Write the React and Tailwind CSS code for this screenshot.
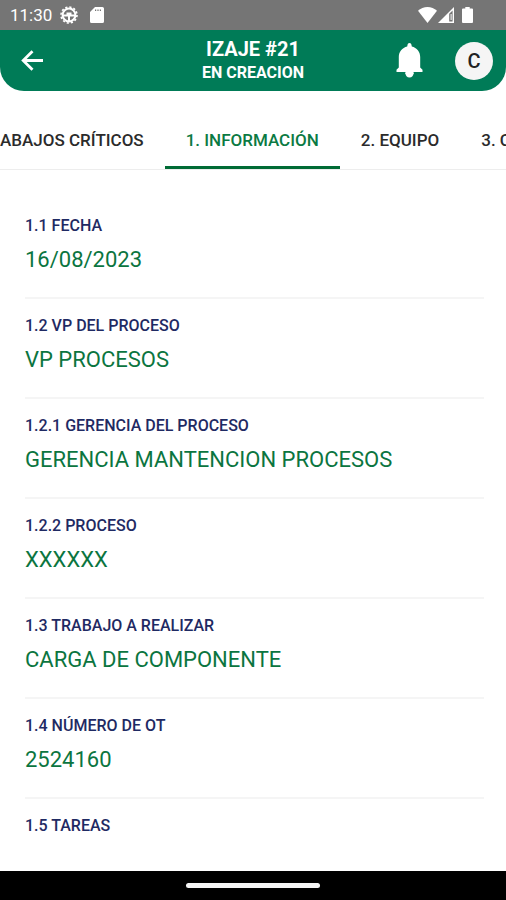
import { useLayoutEffect, useRef, useState } from "react";

const TABS = ["TRABAJOS CRÍTICOS", "1. INFORMACIÓN", "2. EQUIPO", "3. CARGA"];

const FIELDS = [
  { label: "1.1 FECHA", value: "16/08/2023" },
  { label: "1.2 VP DEL PROCESO", value: "VP PROCESOS" },
  { label: "1.2.1 GERENCIA DEL PROCESO", value: "GERENCIA MANTENCION PROCESOS" },
  { label: "1.2.2 PROCESO", value: "XXXXXX" },
  { label: "1.3 TRABAJO A REALIZAR", value: "CARGA DE COMPONENTE" },
  { label: "1.4 NÚMERO DE OT", value: "2524160" },
  { label: "1.5 TAREAS", value: "" },
];

function StatusBar() {
  return (
    <div className="flex h-[30px] shrink-0 items-center justify-between bg-[#757575] pr-[33px] pl-[10px] text-white">
      <div className="flex items-center">
        <span className="text-[17px] leading-5">11:30</span>
        <svg className="ml-2 size-[18px]" viewBox="0 0 18 18" fill="none" stroke="currentColor" aria-hidden="true">
          <circle cx="9" cy="9" r="6.4" strokeWidth="2" />
          <circle cx="9" cy="9" r="8" strokeWidth="1.6" strokeDasharray="2.2 2" />
          <path d="M3 9.500h12M9 9v6" strokeWidth="2" />
          <path d="M6.500 6.500h5v3h-5z" fill="currentColor" stroke="none" />
        </svg>
        <svg className="ml-3 h-4 w-[14px]" viewBox="0 0 14 16" fill="currentColor" aria-hidden="true">
          <path
            fillRule="evenodd"
            d="M5 0h7.4A1.6 1.6 0 0 1 14 1.6v12.8a1.6 1.6 0 0 1-1.6 1.6H1.6A1.6 1.6 0 0 1 0 14.4V5zM5 2.400v1.600h1.200V2.400zM7.400 2.400v1.600h1.200V2.400zM9.800 2.400v1.600h1.200V2.400z"
          />
        </svg>
      </div>
      <div className="flex items-center">
        <svg className="h-4 w-[19px]" viewBox="0 0 19 16" fill="currentColor" aria-hidden="true">
          <path d="M9.500 16 0 3.800C2.600 1.400 5.900 0 9.500 0S16.400 1.400 19 3.800z" />
        </svg>
        <svg className="ml-[1px] h-4 w-4" viewBox="0 0 16 16" aria-hidden="true">
          <path fill="currentColor" fillRule="evenodd" d="M16 0v16H0zM14.600 3.400l-3.400 3.400v7.800h3.400z" />
          <path fill="currentColor" d="M12.600 7h1v6h-1z" />
        </svg>
        <svg className="ml-2 h-4 w-[11px]" viewBox="0 0 11 16" fill="currentColor" aria-hidden="true">
          <path d="M3.300 0h4.400v1.600H10a1 1 0 0 1 1 1V15a1 1 0 0 1-1 1H1a1 1 0 0 1-1-1V2.600a1 1 0 0 1 1-1h2.300z" />
        </svg>
      </div>
    </div>
  );
}

function Header() {
  return (
    <header className="grid h-[61px] shrink-0 grid-cols-[1fr_auto_1fr] items-center rounded-b-3xl bg-[#007b57] px-[13px] text-white">
      <button type="button" aria-label="Volver" className="justify-self-start pl-2">
        <svg className="h-[21px] w-[22px]" viewBox="0 0 22 21" fill="none" stroke="currentColor" strokeWidth="2.800" aria-hidden="true">
          <path d="M22 10.500H2.500M11.500 1.200 2.200 10.500l9.300 9.300" />
        </svg>
      </button>
      <div className="text-center font-bold">
        <h1 className="text-[20px] leading-6">IZAJE #21</h1>
        <p className="text-[16px] leading-6">EN CREACION</p>
      </div>
      <div className="flex items-center gap-8 justify-self-end">
        <button type="button" aria-label="Notificaciones">
          <svg className="h-[35px] w-[27px]" viewBox="0 0 27 35" fill="currentColor" aria-hidden="true">
            <path d="M13.500 0c1.100 0 1.900.8 2 1.900l.3 1.500c5 1.100 8.400 5.300 8.400 10.600v10.500l2.300 2.200V29H.5v-2.300l2.300-2.200V14c0-5.300 3.400-9.500 8.400-10.600l.3-1.500C11.600.8 12.400 0 13.500 0zM9.400 30h8.200c0 2.600-1.700 4.500-4.100 4.500S9.400 32.600 9.400 30z" />
            <path d="M9.400 28.500h8.200V31H9.400z" />
          </svg>
        </button>
        <button
          type="button"
          aria-label="Cuenta"
          className="flex size-[38px] items-center justify-center rounded-full bg-[#f5f5f5] text-[20px] leading-6 font-medium text-[#222222]"
        >
          C
        </button>
      </div>
    </header>
  );
}

function Tabs({ active, onSelect }) {
  const strip = useRef(null);

  // Keep the selected tab in the middle of the scrolling strip.
  useLayoutEffect(() => {
    const nav = strip.current;
    const tab = nav.children[active];
    nav.scrollLeft = tab.offsetLeft - nav.offsetLeft + tab.offsetWidth / 2 - nav.clientWidth / 2;
  }, [active]);

  return (
    <div className="shrink-0 border-b border-[#ededed] pt-5">
      <div ref={strip} role="tablist" className="flex overflow-x-auto [scrollbar-width:none]">
        {TABS.map((name, i) => (
          <button
            key={name}
            type="button"
            role="tab"
            aria-selected={i === active}
            onClick={() => onSelect(i)}
            className={
              "h-[58px] shrink-0 border-b-3 px-[21px] pt-0.5 text-[17px] leading-6 font-medium whitespace-nowrap " +
              (i === active ? "border-[#006b35] text-[#0b7a43]" : "border-transparent text-[#2b2b2b]")
            }
          >
            {name}
          </button>
        ))}
      </div>
    </div>
  );
}

function Field({ label, value }) {
  return (
    <div className="h-[100px] shrink-0 border-b-2 border-[#f5f5f5] pt-[15px]">
      <dt className="text-[16px] leading-6 font-medium text-[#1f2a63]">{label}</dt>
      <dd className="mt-2 text-[22px] leading-7 text-[#0b7540]">{value}</dd>
    </div>
  );
}

export default function App() {
  const [active, setActive] = useState(1);

  return (
    <div className="flex h-screen flex-col overflow-hidden bg-white font-[Roboto,sans-serif]">
      <StatusBar />
      <Header />
      <Tabs active={active} onSelect={setActive} />
      <main className="min-h-0 flex-1 overflow-y-auto pt-[29px] pr-[22px] pl-[25px] [scrollbar-width:none]">
        <dl className="flex flex-col">
          {FIELDS.map((f) => (
            <Field key={f.label} label={f.label} value={f.value} />
          ))}
        </dl>
      </main>
      <div className="flex h-[29px] shrink-0 items-center justify-center bg-black">
        <div className="h-[5px] w-[134px] rounded-full bg-[#f5f5f5]" />
      </div>
    </div>
  );
}
